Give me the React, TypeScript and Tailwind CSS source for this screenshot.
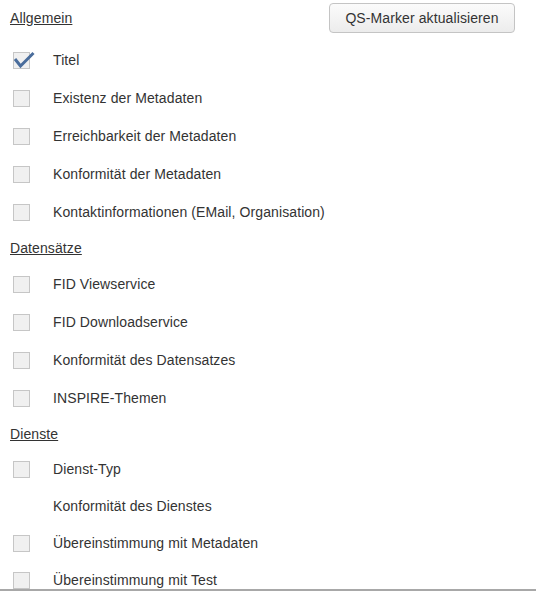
import React from 'react';

type Item = { label: string; checked?: boolean; noBox?: boolean };

const sections: { title: string; rowH: string; items: Item[] }[] = [
  {
    title: 'Allgemein',
    rowH: 'h-[38px]',
    items: [
      { label: 'Titel', checked: true },
      { label: 'Existenz der Metadaten' },
      { label: 'Erreichbarkeit der Metadaten' },
      { label: 'Konformität der Metadaten' },
      { label: 'Kontaktinformationen (EMail, Organisation)' },
    ],
  },
  {
    title: 'Datensätze',
    rowH: 'h-[38px]',
    items: [
      { label: 'FID Viewservice' },
      { label: 'FID Downloadservice' },
      { label: 'Konformität des Datensatzes' },
      { label: 'INSPIRE-Themen' },
    ],
  },
  {
    title: 'Dienste',
    rowH: 'h-[37px]',
    items: [
      { label: 'Dienst-Typ' },
      { label: 'Konformität des Dienstes', noBox: true },
      { label: 'Übereinstimmung mit Metadaten' },
      { label: 'Übereinstimmung mit Test' },
    ],
  },
];

function Checkbox({ checked }: { checked?: boolean }) {
  return (
    <span className="relative inline-block w-[17px] h-[17px] border border-[#c6c6c6] bg-[#f0f0f0]">
      {checked && (
        <svg className="absolute left-[-1px] top-[-4px]" width="24" height="22" viewBox="0 0 24 22">
          <path d="M2 10 L7.5 17 L20.5 4" fill="none" stroke="#4a6d9c" strokeWidth="3" />
        </svg>
      )}
    </span>
  );
}

export default function App() {
  return (
    <div
      className="w-[536px] h-[591px] overflow-hidden border-b-2 border-[#a8a8a8] bg-white text-[14px] tracking-[0.1px] text-[#333]"
      style={{ fontFamily: '"Liberation Sans", Arial, sans-serif' }}
    >
      {sections.map((s, i) => (
        <div key={s.title}>
          {i === 0 ? (
            <div className="flex items-center justify-between h-[36px] mb-[5px] pl-[10px] pr-[21px]">
              <span className="underline">{s.title}</span>
              <button className="w-[186px] h-[30px] rounded-[4px] border border-[#c4c4c4] bg-gradient-to-b from-[#fbfbfb] to-[#ececec] text-[14px] text-[#333]">
                QS-Marker aktualisieren
              </button>
            </div>
          ) : (
            <div className="flex items-center h-[34px] pl-[10px]">
              <span className="underline">{s.title}</span>
            </div>
          )}
          {s.items.map(item => (
            <div key={item.label} className={`flex items-center ${s.rowH} pl-[13px]`}>
              <span className="w-[40px] flex items-center">
                {!item.noBox && <Checkbox checked={item.checked} />}
              </span>
              <span>{item.label}</span>
            </div>
          ))}
        </div>
      ))}
    </div>
  );
}
